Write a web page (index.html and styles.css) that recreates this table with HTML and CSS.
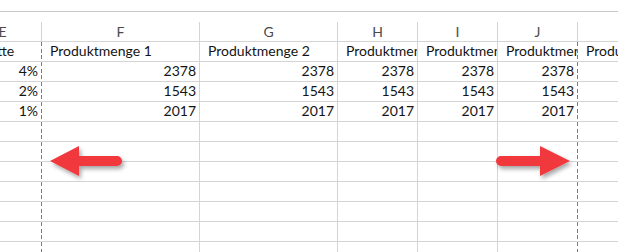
FILE: index.html
```html
<!DOCTYPE html>
<html lang="de">
<head>
<meta charset="utf-8">
<title>Seitenumbruchvorschau</title>
<link rel="stylesheet" href="styles.css">
</head>
<body>
<div class="viewport">
  <div class="topbar"></div>
  <div class="header-gap"></div>
  <div class="sheet">
    <!-- column letters -->
    <div class="col-head">E</div>
    <div class="col-head">F</div>
    <div class="col-head">G</div>
    <div class="col-head">H</div>
    <div class="col-head">I</div>
    <div class="col-head">J</div>
    <div class="col-head last">K</div>

    <!-- row 1: titles -->
    <div class="cell text brk first">Rabatte</div>
    <div class="cell text">Produktmenge 1</div>
    <div class="cell text">Produktmenge 2</div>
    <div class="cell text">Produktmenge 3</div>
    <div class="cell text">Produktmenge 4</div>
    <div class="cell text brk">Produktmenge 5</div>
    <div class="cell text last">Produktmenge 6</div>

    <!-- row 2 -->
    <div class="cell num brk">4%</div>
    <div class="cell num">2378</div>
    <div class="cell num">2378</div>
    <div class="cell num">2378</div>
    <div class="cell num">2378</div>
    <div class="cell num brk">2378</div>
    <div class="cell num last"></div>

    <!-- row 3 -->
    <div class="cell num brk">2%</div>
    <div class="cell num">1543</div>
    <div class="cell num">1543</div>
    <div class="cell num">1543</div>
    <div class="cell num">1543</div>
    <div class="cell num brk">1543</div>
    <div class="cell num last"></div>

    <!-- row 4 -->
    <div class="cell num brk">1%</div>
    <div class="cell num">2017</div>
    <div class="cell num">2017</div>
    <div class="cell num">2017</div>
    <div class="cell num">2017</div>
    <div class="cell num brk">2017</div>
    <div class="cell num last"></div>

    <!-- empty rows -->
    <div class="cell brk"></div><div class="cell"></div><div class="cell"></div><div class="cell"></div><div class="cell"></div><div class="cell brk"></div><div class="cell last"></div>
    <div class="cell brk"></div><div class="cell"></div><div class="cell"></div><div class="cell"></div><div class="cell"></div><div class="cell brk"></div><div class="cell last"></div>
    <div class="cell brk"></div><div class="cell"></div><div class="cell"></div><div class="cell"></div><div class="cell"></div><div class="cell brk"></div><div class="cell last"></div>
    <div class="cell brk"></div><div class="cell"></div><div class="cell"></div><div class="cell"></div><div class="cell"></div><div class="cell brk"></div><div class="cell last"></div>
    <div class="cell brk"></div><div class="cell"></div><div class="cell"></div><div class="cell"></div><div class="cell"></div><div class="cell brk"></div><div class="cell last"></div>
    <div class="cell brk"></div><div class="cell"></div><div class="cell"></div><div class="cell"></div><div class="cell"></div><div class="cell brk"></div><div class="cell last"></div>
    <div class="cell brk"></div><div class="cell"></div><div class="cell"></div><div class="cell"></div><div class="cell"></div><div class="cell brk"></div><div class="cell last"></div>
  </div>

  <!-- page break drag hints -->
  <svg class="arrows" width="618" height="252" viewBox="0 0 618 252" aria-hidden="true">
    <defs>
      <filter id="shade" x="-20%" y="-30%" width="150%" height="180%">
        <feDropShadow dx="2" dy="3" stdDeviation="2" flood-color="#000" flood-opacity="0.35"/>
      </filter>
    </defs>
    <g fill="#f1393d" filter="url(#shade)">
      <path d="M50 161 L79 146 L79 156 L117 156 A5 5 0 0 1 117 166 L79 166 L79 176 Z"/>
      <path d="M570 161 L540 146 L540 156 L501 156 A5 5 0 0 0 501 166 L540 166 L540 176 Z"/>
    </g>
  </svg>
</div>
</body>
</html>
```

FILE: styles.css
```css
html, body {
  margin: 0;
  padding: 0;
  background: #fff;
}

.viewport {
  position: relative;
  width: 618px;
  height: 252px;
  overflow: hidden;
  font-family: "Lato", "Open Sans", sans-serif;
  font-size: 14px;
  color: #141414;
}

.topbar {
  height: 12px;
  box-sizing: border-box;
  background: #fff;
  border-bottom: 1px solid #c9c9c9;
}

.header-gap {
  height: 10px;
}

.sheet {
  display: grid;
  grid-template-columns: 78px 158px 138px 80px 80px 80px 110px;
  grid-auto-rows: 20px;
  margin-left: -36px;
}

.col-head,
.cell {
  box-sizing: border-box;
  border-right: 1px solid #d4d4d4;
  border-bottom: 1px solid #d4d4d4;
  overflow: hidden;
  white-space: nowrap;
}

.col-head {
  display: flex;
  align-items: center;
  justify-content: center;
  color: #4a4a4a;
  padding-bottom: 1px;
}

.cell {
  display: flex;
  align-items: flex-end;
  padding: 0 3px 2px 8px;
  line-height: 16px;
}

.cell.num {
  justify-content: flex-end;
}

.cell.text {
  justify-content: flex-start;
}

.cell.first {
  padding-left: 3px;
}

.last {
  border-right: none;
}

/* dashed page break along the right edge of the column */
.cell.brk {
  border-right-color: transparent;
  background-image: repeating-linear-gradient(to bottom, #7c7c7c 0 4px, transparent 4px 6.667px);
  background-origin: border-box;
  background-position: right top;
  background-size: 1px 20px;
  background-repeat: no-repeat;
}

.arrows {
  position: absolute;
  left: 0;
  top: 0;
  pointer-events: none;
}
```
